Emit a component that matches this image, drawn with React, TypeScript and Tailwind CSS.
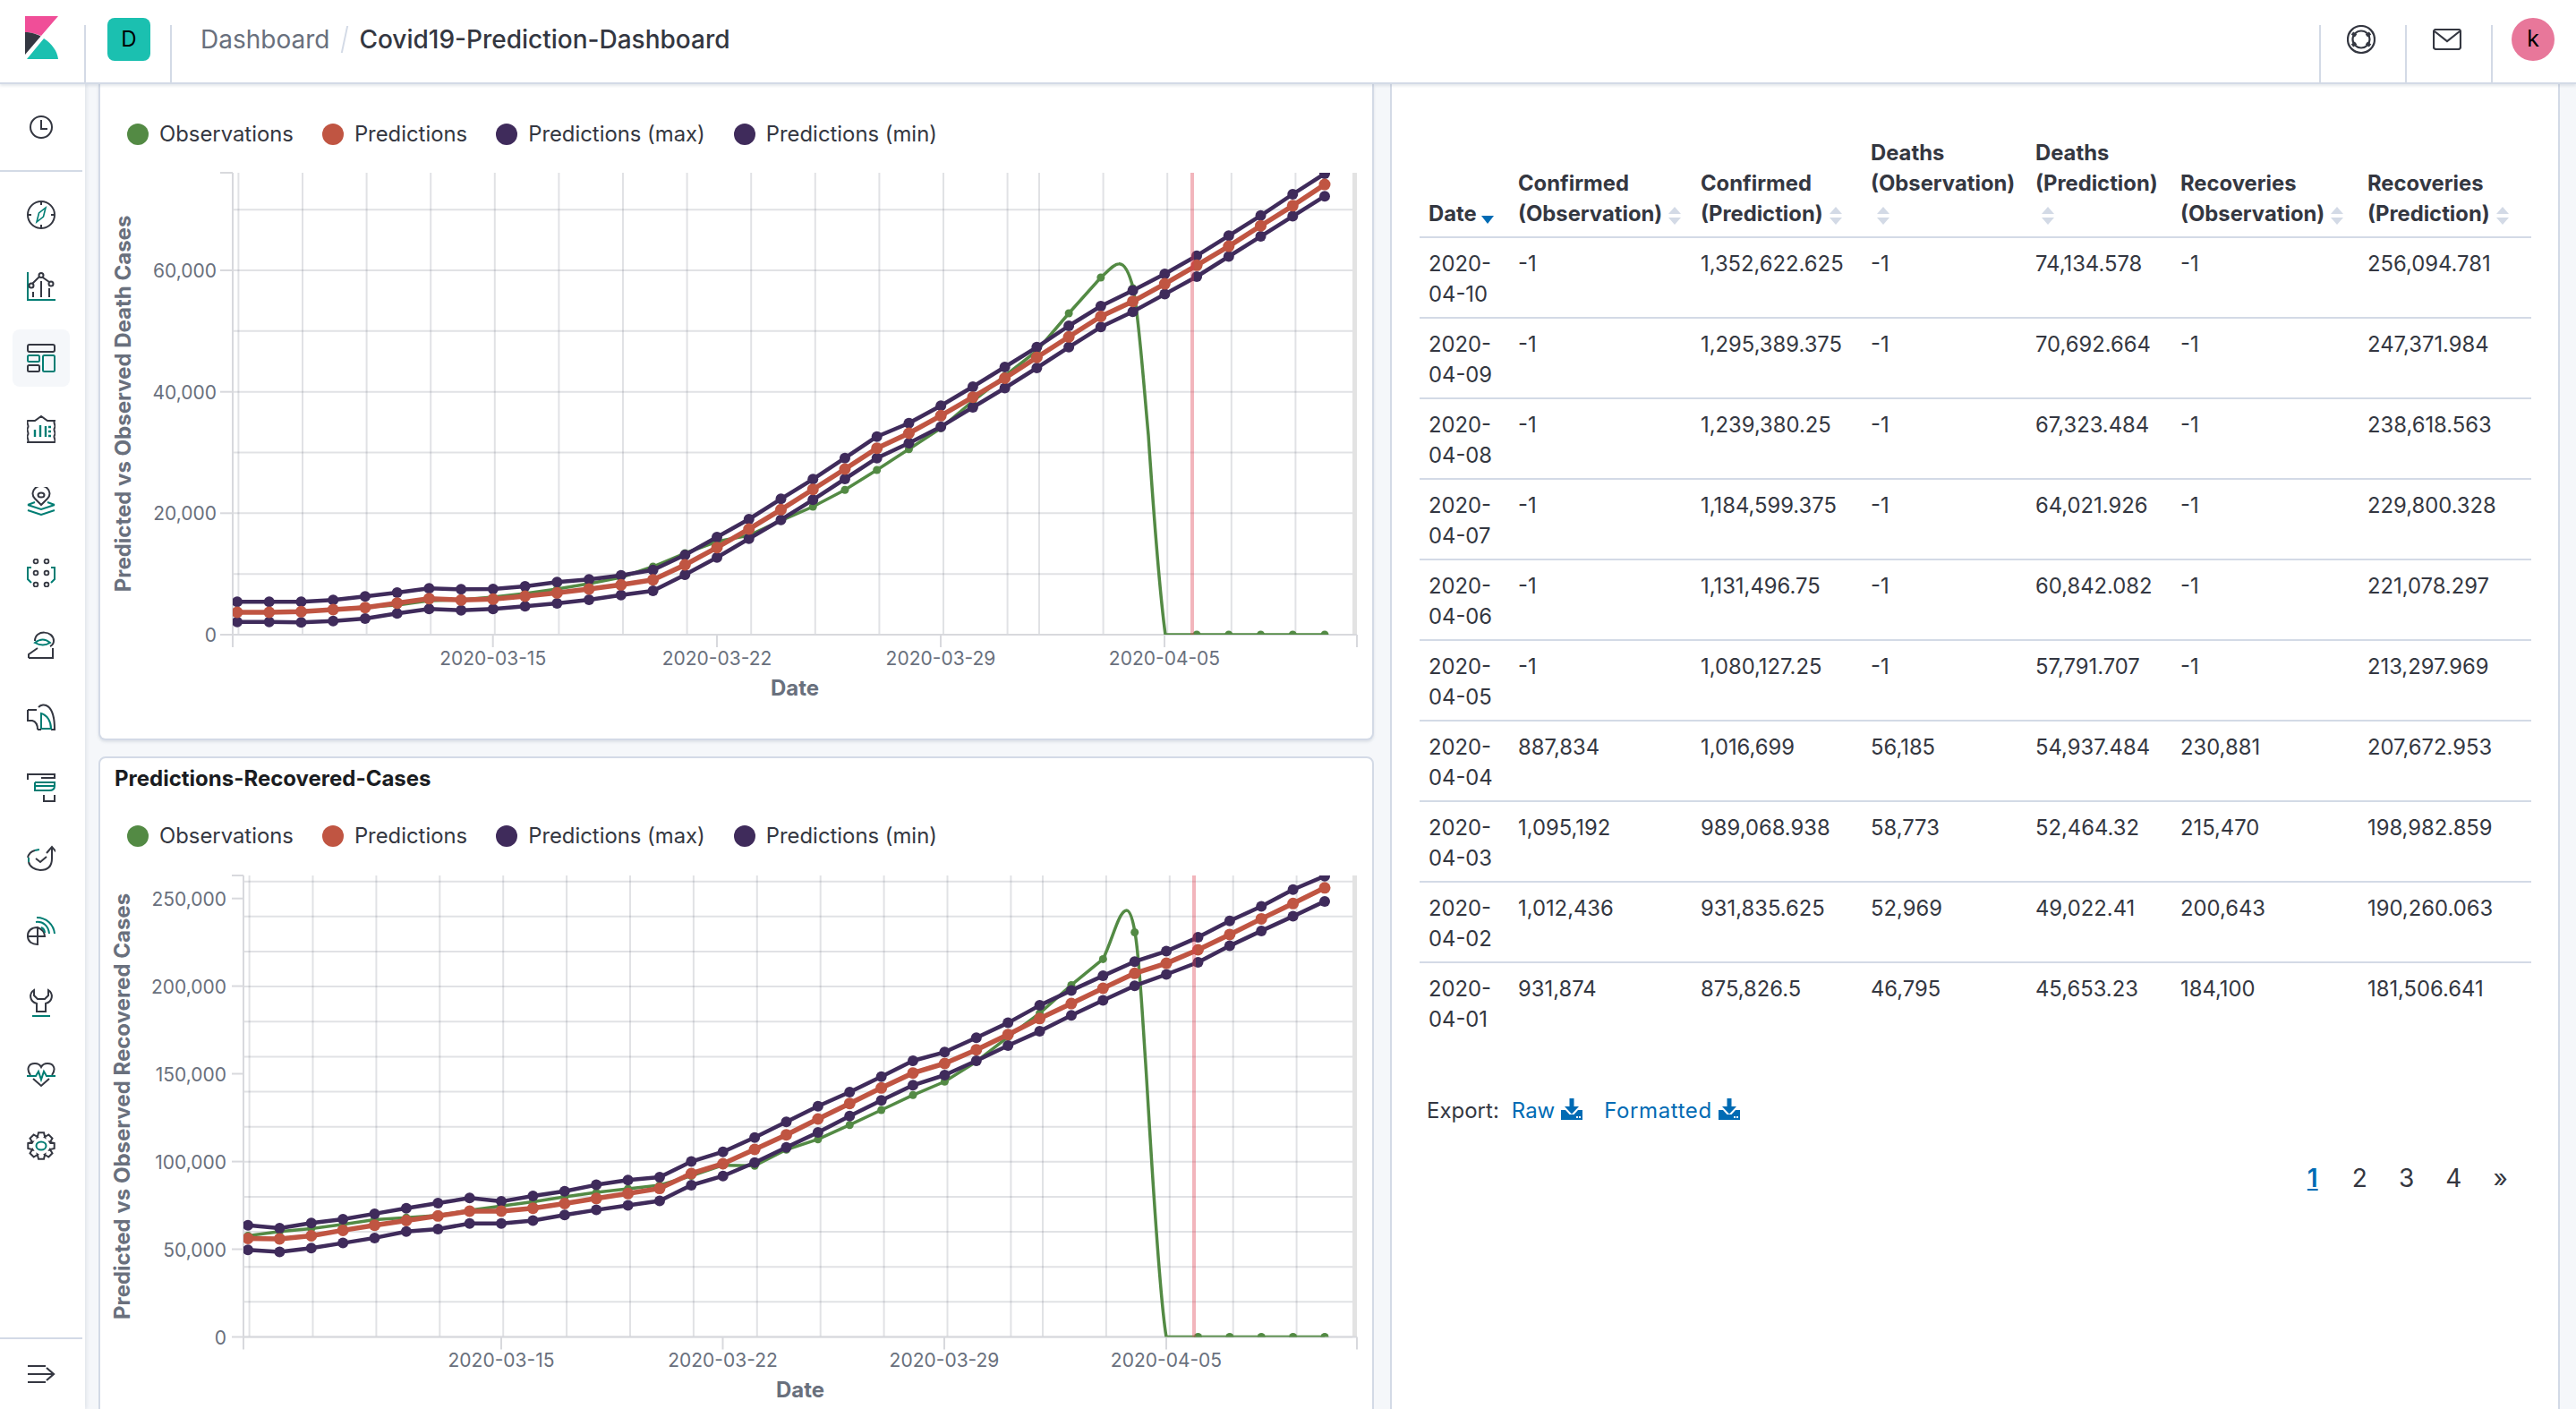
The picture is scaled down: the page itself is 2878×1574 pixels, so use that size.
import React from "react";

const DK = "#343741";
const TL = "#017d73";

const rows = [
  ["04-10", "-1", "1,352,622.625", "-1", "74,134.578", "-1", "256,094.781"],
  ["04-09", "-1", "1,295,389.375", "-1", "70,692.664", "-1", "247,371.984"],
  ["04-08", "-1", "1,239,380.25", "-1", "67,323.484", "-1", "238,618.563"],
  ["04-07", "-1", "1,184,599.375", "-1", "64,021.926", "-1", "229,800.328"],
  ["04-06", "-1", "1,131,496.75", "-1", "60,842.082", "-1", "221,078.297"],
  ["04-05", "-1", "1,080,127.25", "-1", "57,791.707", "-1", "213,297.969"],
  ["04-04", "887,834", "1,016,699", "56,185", "54,937.484", "230,881", "207,672.953"],
  ["04-03", "1,095,192", "989,068.938", "58,773", "52,464.32", "215,470", "198,982.859"],
  ["04-02", "1,012,436", "931,835.625", "52,969", "49,022.41", "200,643", "190,260.063"],
  ["04-01", "931,874", "875,826.5", "46,795", "45,653.23", "184,100", "181,506.641"],
];

type ChartSpec = {
  vb: [number, number, number, number];
  x0: number;
  x1: number;
  max: number[];
  pred: number[];
  min: number[];
  obs: number[];
  tail: string;
  tailStart: number;
  axisX: number;
  top: number;
  bottom: number;
  yTicks: [string, number][];
  hGrid: number[];
  vGrid: number[];
  xTicks: [string, number][];
  redX: number;
  yTitle: string;
  yTitleX: number;
  yTitleY: number;
  labelRight: number;
  labelY: number;
  dateX: number;
  dateY: number;
  tickLeft: number;
};

const range = (n: number, f: (i: number) => number) => Array.from({ length: n }, (_, i) => f(i));

const chart1: ChartSpec = {
  vb: [112, 164, 1421, 660],
  x0: 265,
  x1: 1480,
  max: [672.3,672.3,672.3,670.3,666.3,662,657.3,658.3,658,655,650.3,647.3,642.7,636.7,620,600,580,557.3,535.3,511.7,487.7,472.7,453.3,432,410,387.8,364,342,324.5,306,285.7,263.3,240.8,217,194],
  pred: [684,684,683.3,681,678.7,673.7,668.7,670.3,669.3,666,662.3,658,653.3,647.7,631,611.7,591,569.3,546.7,524,500.7,484,464.3,443.7,422.4,399.2,376.3,353.5,336.7,317.1,296.3,275.1,252.2,229.8,206.1],
  min: [694.7,694.7,695.3,693.7,691,685.3,680.3,681.7,680.3,677.3,674,670,664.7,660,642,622.7,601.7,580.7,558.3,535,511.7,495,476.7,455,433.5,411,387.8,365.3,348.2,328.6,309,286.5,264.1,241.6,219.2],
  obs: [684,684,683,681,678,676,671,670,667,663,658,652,645,633,618,605,598,581.7,566,547.3,525,501.7,478.3,448,420,392,350,310],
  tail: "C1238 303 1244 295 1250 294.7 C1258 294 1263 310 1266 322 C1272 350 1277 420 1283 486 C1288 560 1296 665 1302 709",
  tailStart: 322,
  axisX: 260,
  top: 193,
  bottom: 709,
  yTicks: [["60,000", 302], ["40,000", 437.7], ["20,000", 573.3], ["0", 709]],
  hGrid: range(8, (n) => 709 - 67.83 * n),
  vGrid: [...range(13, (k) => 266.4 + 71.6 * k), ...range(5, (m) => 1161 + 71.6 * m)],
  xTicks: [["2020-03-15", 550.7], ["2020-03-22", 801], ["2020-03-29", 1051], ["2020-04-05", 1301]],
  redX: 1332,
  yTitle: "Predicted vs Observed Death Cases",
  yTitleX: 138,
  yTitleY: 451,
  labelRight: 242,
  labelY: 735,
  dateX: 888,
  dateY: 769,
  tickLeft: 246,
};

const chart2: ChartSpec = {
  vb: [112, 948, 1421, 626],
  x0: 277,
  x1: 1480,
  max: [1368.7,1372,1366.3,1362,1355.9,1349.7,1344,1338.3,1342.1,1336,1330.7,1323.6,1318.3,1315,1297.6,1286.7,1270.7,1253.3,1235.7,1220,1202.7,1185,1175.3,1159.3,1142.6,1123.1,1106.4,1090.1,1074.2,1062.6,1047.1,1028.8,1012.5,993.8,978.7],
  pred: [1383.4,1383.9,1380.5,1374.4,1368.7,1363.5,1358.3,1353,1353,1349.7,1344.5,1338.8,1333.3,1327.6,1311,1300,1284,1267.7,1250,1232.7,1215.3,1198.7,1188,1172.7,1155.7,1137.8,1121.1,1104,1087.3,1076.1,1061,1043.9,1026.4,1009.3,991.8],
  min: [1396.2,1398.6,1394.3,1388.6,1382.9,1375.8,1373,1366.8,1366.8,1363.5,1357.3,1351.6,1346.6,1341.4,1324,1313.7,1298.7,1281.7,1265,1246.7,1229.3,1212.3,1201,1185,1168,1152.1,1134.2,1117.5,1101.2,1088.5,1075,1056.6,1039.9,1023.6,1006.9],
  obs: [1380.5,1375.8,1372.5,1367.7,1362.5,1360.2,1357.8,1352.1,1347.3,1342.6,1336.9,1332.1,1328,1324,1313.5,1301.7,1302.3,1284.3,1272.7,1256.7,1240,1223.3,1208.3,1186,1158.3,1132,1100.4,1071.4],
  tail: "C1243 1050 1250 1017 1258.7 1017 C1263 1017 1266 1030 1268 1041.5 C1273 1069 1276 1130 1280 1189 C1284 1250 1294 1440 1303 1493.5",
  tailStart: 1041.5,
  axisX: 272,
  top: 978,
  bottom: 1493.5,
  yTicks: [["250,000", 1003.7], ["200,000", 1101.6], ["150,000", 1199.5], ["100,000", 1297.6], ["50,000", 1395.5], ["0", 1493.5]],
  hGrid: range(14, (n) => 1493.5 - 39.14 * n),
  vGrid: [...range(13, (k) => 278.6 + 70.9 * k), ...range(5, (m) => 1165 + 70.9 * m)],
  xTicks: [["2020-03-15", 560], ["2020-03-22", 807.5], ["2020-03-29", 1055], ["2020-04-05", 1303]],
  redX: 1334,
  yTitle: "Predicted vs Observed Recovered Cases",
  yTitleX: 137,
  yTitleY: 1236,
  labelRight: 253,
  labelY: 1519,
  dateX: 894,
  dateY: 1553,
  tickLeft: 259,
};

function Series({ pts, color, width, r }: { pts: [number, number][]; color: string; width: number; r: number }) {
  return (
    <g>
      <polyline points={pts.map((p) => p.join(",")).join(" ")} fill="none" stroke={color} strokeWidth={width} strokeLinejoin="round" />
      {pts.map((p, i) => (
        <circle key={i} cx={p[0]} cy={p[1]} r={r} fill={color} />
      ))}
    </g>
  );
}

function Chart({ c, id }: { c: ChartSpec; id: string }) {
  const step = (c.x1 - c.x0) / 34;
  const xAt = (i: number) => c.x0 + step * i;
  const toPts = (a: number[]) => a.map((y, i) => [xAt(i), y] as [number, number]);
  const obsPts = toPts(c.obs);
  const zeroPts = range(5, (i) => [xAt(30 + i), c.bottom] as [number, number]);
  const axis = "#d8d9dd";
  return (
    <svg
      className="block"
      width={c.vb[2]}
      height={c.vb[3]}
      viewBox={c.vb.join(" ")}
      style={{ fontFamily: "Inter, sans-serif" }}
    >
      <defs>
        <clipPath id={id}>
          <rect x={c.axisX} y={c.top} width={1516 - c.axisX} height={c.bottom - c.top} />
        </clipPath>
      </defs>
      {c.hGrid.map((y, i) => (
        <line key={i} x1={c.axisX} x2={1511} y1={y} y2={y} stroke="#69707d" strokeOpacity={0.2} strokeWidth={2} />
      ))}
      {c.vGrid.map((x, i) => (
        <line key={i} x1={x} x2={x} y1={c.top} y2={c.bottom} stroke="#69707d" strokeOpacity={0.2} strokeWidth={2} />
      ))}
      <rect x={1511} y={c.top} width={5} height={c.bottom - c.top} fill="#e3e3e3" />
      <line x1={c.axisX} x2={c.axisX} y1={c.top} y2={c.bottom + 14} stroke={axis} strokeWidth={2} />
      <line x1={c.axisX} x2={1516} y1={c.bottom} y2={c.bottom} stroke={axis} strokeWidth={2} />
      <line x1={1516} x2={1516} y1={c.bottom} y2={c.bottom + 14} stroke={axis} strokeWidth={2} />
      <line x1={c.tickLeft} x2={c.axisX} y1={c.top} y2={c.top} stroke={axis} strokeWidth={2} />
      {c.yTicks.map(([t, y]) => (
        <g key={t}>
          <line x1={c.tickLeft} x2={c.axisX} y1={y} y2={y} stroke={axis} strokeWidth={2} />
          <text x={c.labelRight} y={y + 8} textAnchor="end" fontSize={21} fill="#69707d">
            {t}
          </text>
        </g>
      ))}
      {c.xTicks.map(([t, x]) => (
        <g key={t}>
          <line x1={x} x2={x} y1={c.bottom} y2={c.bottom + 14} stroke={axis} strokeWidth={2} />
          <text x={x} y={c.labelY + 8} textAnchor="middle" fontSize={21} fill="#69707d">
            {t}
          </text>
        </g>
      ))}
      <text x={c.dateX} y={c.dateY + 8} textAnchor="middle" fontSize={24} fontWeight={700} fill="#69707d">
        Date
      </text>
      <text
        transform={`rotate(-90 ${c.yTitleX} ${c.yTitleY})`}
        x={c.yTitleX}
        y={c.yTitleY + 8}
        textAnchor="middle"
        fontSize={24}
        fontWeight={700}
        fill="#69707d"
      >
        {c.yTitle}
      </text>
      <g clipPath={`url(#${id})`}>
        <path
          d={`M${obsPts.map((p) => p.join(" ")).join(" L")} ${c.tail} L1480 ${c.bottom}`}
          fill="none"
          stroke="#538a44"
          strokeWidth={3.5}
        />
        {obsPts.map((p, i) => (
          <circle key={i} cx={p[0]} cy={p[1]} r={4.5} fill="#538a44" />
        ))}
        <circle cx={xAt(28)} cy={c.tailStart} r={4.5} fill="#538a44" />
        {zeroPts.map((p, i) => (
          <circle key={i} cx={p[0]} cy={p[1]} r={4.5} fill="#538a44" />
        ))}
        <Series pts={toPts(c.max)} color="#3f2b5b" width={4.5} r={6} />
        <Series pts={toPts(c.min)} color="#3f2b5b" width={4.5} r={6} />
        <Series pts={toPts(c.pred)} color="#c05542" width={5.5} r={6.5} />
      </g>
      <rect x={c.redX - 2} y={c.top} width={4} height={c.bottom - c.top} fill="#dd3c50" fillOpacity={0.38} />
    </svg>
  );
}

function Legend() {
  const items: [string, string][] = [
    ["Observations", "bg-[#538a44]"],
    ["Predictions", "bg-[#c05542]"],
    ["Predictions (max)", "bg-[#3f2b5b]"],
    ["Predictions (min)", "bg-[#3f2b5b]"],
  ];
  return (
    <div className="flex h-[29px] items-center gap-[32px] pl-[30px]">
      {items.map(([t, cls]) => (
        <div key={t} className="flex items-center gap-[12px]">
          <span className={`h-[24px] w-[24px] rounded-full ${cls}`} />
          <span className="text-[23.85px] leading-[29px] text-[#343741]">{t}</span>
        </div>
      ))}
    </div>
  );
}

function SortIcon({ active }: { active?: boolean }) {
  if (active)
    return (
      <svg className="ml-[5px] inline-block align-[-4px]" width="14" height="10" viewBox="0 0 14 10">
        <path d="M0 0H14L7 9Z" fill="#006bb4" />
      </svg>
    );
  return (
    <svg className="ml-[7px] inline-block align-[-4px]" width="14" height="20" viewBox="0 0 14 20">
      <path d="M0 8L7 0L14 8Z M0 12H14L7 20Z" fill="#d3dae6" />
    </svg>
  );
}

function Ico({ children }: { children: React.ReactNode }) {
  return (
    <svg width="32" height="32" viewBox="0 0 32 32" fill="none" strokeWidth="2" stroke={DK}>
      {children}
    </svg>
  );
}

const gearPath = (() => {
  const pts: string[] = [];
  const n = 8;
  for (let i = 0; i < n; i++) {
    const a = (i * 2 * Math.PI) / n - Math.PI / 2;
    const d = 0.2;
    const seq: [number, number][] = [
      [10.5, a - 0.39 * 1.05],
      [15, a - d],
      [15, a + d],
      [10.5, a + 0.39 * 1.05],
    ];
    seq.forEach(([r, t]) => pts.push(`${(16 + r * Math.cos(t)).toFixed(1)} ${(16 + r * Math.sin(t)).toFixed(1)}`));
  }
  return "M" + pts.join(" L") + " Z";
})();

const navIcons: React.ReactNode[] = [
  <Ico key="c">
    <circle cx="16" cy="16" r="15" />
    <path d="M16 2V5M16 27V30M2 16H5M27 16H30" />
    <path d="M21 8L18.5 18L11 24L13.5 14Z" stroke={TL} strokeWidth="1.6" />
  </Ico>,
  <Ico key="v">
    <path d="M1 0V31H32" stroke={TL} />
    <path d="M6 13L15 4L25 11" />
    <circle cx="5" cy="15" r="2.5" fill="#fff" />
    <circle cx="16" cy="3.5" r="2.5" fill="#fff" />
    <circle cx="27" cy="13" r="2.5" fill="#fff" />
    <path d="M7 22V28M16 10V28M25 18V28" />
  </Ico>,
  <Ico key="d">
    <rect x="1" y="1" width="30" height="8" rx="2" />
    <rect x="1" y="13" width="13" height="7" rx="1.5" stroke={TL} />
    <rect x="1" y="24" width="13" height="7" rx="1.5" />
    <rect x="18" y="13" width="13" height="18" rx="1.5" stroke={TL} />
  </Ico>,
  <Ico key="cv">
    <path d="M1 6H9L16 1L23 6H31C29 9 33 11 31 14C29 17 33 19 31 22C29 25 33 27 31 30H1C3 27 -1 25 1 22C3 19 -1 17 1 14C3 11 -1 9 1 6Z" />
    <path d="M9 16V24M15 11V24M21 12V24M24 13H27M24 18H27M24 23H27" stroke={TL} strokeWidth="2.4" />
  </Ico>,
  <Ico key="m">
    <path d="M16 20L9 13A9.5 8.5 0 1 1 23 13Z" />
    <ellipse cx="16" cy="9" rx="3.5" ry="2.5" />
    <path d="M1 20L9 17M31 20L23 17M1 20L16 25L31 20M1 26L16 31L31 26" stroke={TL} />
  </Ico>,
  <Ico key="ml">
    <g strokeWidth="1.8">
      <circle cx="10" cy="3" r="2.4" />
      <circle cx="22" cy="3" r="2.4" />
      <circle cx="10" cy="16" r="2.4" />
      <circle cx="22" cy="16" r="2.4" />
      <circle cx="10" cy="29" r="2.4" />
      <circle cx="22" cy="29" r="2.4" />
    </g>
    <path d="M5 10L1 10V23L5 27M27 10L31 10V23L27 27" stroke={TL} />
  </Ico>,
  <Ico key="u">
    <path d="M2 31V27L12 20M2 31H29V20" />
    <path d="M9 12C9 -1 30 0 30 12C30 15 28 17 26 18" />
    <path d="M9 14Q18 7 26 14Q18 19 9 14Z" stroke={TL} />
  </Ico>,
  <Ico key="a">
    <path d="M13 6C18 1 31 1 31 31H27" />
    <path d="M1 9H11M1 9V21H6C10 22 12 26 12 31" />
    <path d="M16 30V13C23 15 27 22 27 30Z" stroke={TL} />
    <path d="M12 31H16" />
  </Ico>,
  <Ico key="t">
    <path d="M1 7V1H31V5H16" />
    <path d="M9 10H31V14C31 18 28 19 25 19H9V10M31 14H9" stroke={TL} />
    <path d="M19 24V31H31V24" />
  </Ico>,
  <Ico key="s">
    <path d="M9 6C5 7 2 10 1 14M2 19C3 24 9 28 15 28C23 28 28 24 28 15V3M22 9L28 2L34 9" />
    <path d="M9 6L14 5M2 14V19" stroke={TL} strokeDasharray="5 3" />
    <path d="M10 15L15 19L22 13" />
  </Ico>,
  <Ico key="r">
    <path d="M12 31V12C5 12 1 16 1 21V22H20C20 17 17 14 12 12M12 22V31C6 31 1 28 1 22" />
    <path d="M10 6C18 5 24 10 25 19M11 1C22 1 30 9 31 19M16 12C18 13 20 15 20 18" stroke={TL} />
  </Ico>,
  <Ico key="w">
    <path d="M8 2C2 6 3 15 11 17V26H21V17C29 15 30 6 24 2V8L20 12H12L8 8Z" />
    <path d="M6 31H26" stroke={TL} />
  </Ico>,
  <Ico key="h">
    <path d="M4 17C-1 10 2 4 9 4C12 4 15 6 16 8C17 6 20 4 23 4C30 4 33 10 28 17M7 21L16 29L25 21" />
    <path d="M0 18H10L13 13L16 22L19 13L22 18H32" stroke={TL} />
  </Ico>,
  <Ico key="g">
    <path d={gearPath} />
    <ellipse cx="16" cy="16" rx="5.5" ry="4.5" stroke={TL} />
  </Ico>,
];

function DownloadIcon() {
  return (
    <svg className="ml-[7px] inline-block align-[-2px]" width="24" height="24" viewBox="0 0 24 24" fill="#006bb4">
      <path d="M9.5 0H14.5V9H20L12 17.5L4 9H9.5Z" />
      <path d="M0 13H5L9.5 18H14.5L19 13H24V24H0Z" />
      <rect x="17" y="20" width="2" height="2" fill="#fff" />
      <rect x="20" y="20" width="2" height="2" fill="#fff" />
    </svg>
  );
}

const thCls = "whitespace-nowrap pb-[8px] pl-[10px] align-bottom font-bold";
const tdCls = "pb-[8px] pl-[10px] pt-[12px] align-top";

export default function App() {
  return (
    <div className="flex h-[1574px] w-[2878px] flex-col overflow-hidden bg-[#f5f7fa] text-[#343741] [font-family:Inter,sans-serif]">
      <header className="relative z-10 flex h-[94px] shrink-0 border-b-2 border-[#d3dae6] bg-white shadow-[0_2px_3px_rgba(152,162,179,0.25)]">
        <div className="h-[88px] w-[94px]">
          <svg width="94" height="88" viewBox="0 0 94 88">
            <path d="M28 18H65L46 40C41 38 34 36 28 36Z" fill="#f04e98" />
            <path d="M28 36C34 36 41 38 45.5 40.5L28 61Z" fill="#343741" />
            <path d="M30 66L49 43C58 49 64 57 65 66Z" fill="#1bc0b0" />
          </svg>
        </div>
        <div className="mt-[28px] h-[64px] w-[2px] bg-[#d3dae6]" />
        <div className="flex h-[88px] w-[94px] items-center justify-center pl-[2px]">
          <div className="flex h-[48px] w-[48px] items-center justify-center rounded-[8px] bg-[#1bc0b0] text-[24px] text-black">
            D
          </div>
        </div>
        <div className="mt-[28px] h-[64px] w-[2px] bg-[#d3dae6]" />
        <div className="flex h-[88px] flex-1 items-center pl-[32px] text-[28px]">
          <span className="text-[#69707d]">Dashboard</span>
          <span className="ml-[16px] mr-[15px] h-[30px] w-[2px] -skew-x-12 bg-[#d3dae6]" />
          <span className="font-medium text-[#343741]">Covid19-Prediction-Dashboard</span>
        </div>
        <div className="mt-[28px] h-[64px] w-[2px] bg-[#d3dae6]" />
        <div className="flex h-[88px] w-[94px] items-center justify-center pr-[4px]">
          <svg width="32" height="32" viewBox="0 0 32 32" fill="none" stroke={DK} strokeWidth="2.2">
            <circle cx="16" cy="16" r="15" />
            <circle cx="16" cy="16" r="9.5" />
            <path d="M6 9L10 12M26 9L22 12M6 23L10 20M26 23L22 20" strokeWidth="4" />
          </svg>
        </div>
        <div className="mt-[28px] h-[64px] w-[2px] bg-[#d3dae6]" />
        <div className="flex h-[88px] w-[94px] items-center justify-center pr-[4px]">
          <svg width="32" height="24" viewBox="0 0 32 24" fill="none" stroke={DK} strokeWidth="2.2">
            <rect x="1" y="1" width="30" height="22" rx="2.5" />
            <path d="M2 3L16 14L30 3" />
          </svg>
        </div>
        <div className="mt-[28px] h-[64px] w-[2px] bg-[#d3dae6]" />
        <div className="flex h-[88px] w-[93px] items-center justify-center pr-[3px]">
          <div className="flex h-[48px] w-[48px] items-center justify-center rounded-full bg-[#e8779a] text-[25px] text-black">
            k
          </div>
        </div>
      </header>

      <div className="flex min-h-0 flex-1">
        <nav className="flex w-[95px] shrink-0 flex-col bg-white pr-[3px] shadow-[2px_0_4px_rgba(152,162,179,0.2)]">
          <div className="flex h-[98px] shrink-0 items-center justify-center border-b-2 border-[#d3dae6]">
            <svg width="26" height="26" viewBox="0 0 26 26" fill="none" stroke={DK} strokeWidth="2">
              <circle cx="13" cy="13" r="12" />
              <path d="M13 5V15H20" />
            </svg>
          </div>
          <div className="flex flex-col pt-[8px]">
            {navIcons.map((ic, i) => (
              <div key={i} className="flex h-[80px] items-center justify-center">
                {i === 2 ? (
                  <div className="flex h-[64px] w-[64px] items-center justify-center rounded-[8px] bg-[#f5f7fa]">{ic}</div>
                ) : (
                  ic
                )}
              </div>
            ))}
          </div>
          <div className="mt-auto flex h-[80px] shrink-0 items-center justify-center border-t-2 border-[#d3dae6]">
            <svg width="32" height="24" viewBox="0 0 32 24" fill="none" stroke={DK} strokeWidth="2.2">
              <path d="M1 3H21M1 12H29M1 21H21M22 5L30 12L22 19" />
            </svg>
          </div>
        </nav>

        <main className="flex min-w-0 flex-1 gap-[18px] pl-[15px]">
          <div className="flex w-[1425px] shrink-0 flex-col gap-[18px]">
            <section className="h-[733px] shrink-0 rounded-b-[8px] border-x-2 border-b-2 border-[#d3dae6] bg-white shadow-[0_2px_3px_rgba(152,162,179,0.25)]">
              <div className="pt-[41px]">
                <Legend />
              </div>
              <Chart c={chart1} id="clip-a" />
            </section>
            <section className="h-[760px] shrink-0 rounded-[8px] border-2 border-[#d3dae6] bg-white">
              <h3 className="flex h-[44px] items-center pl-[16px] pt-[1px] text-[24px] font-bold text-[#1a1c21]">
                Predictions-Recovered-Cases
              </h3>
              <div className="pt-[28px]">
                <Legend />
              </div>
              <Chart c={chart2} id="clip-b" />
            </section>
          </div>

          <section className="w-[1307px] shrink-0 border-x-2 border-[#d3dae6] bg-white pl-[31px] pt-[60px]">
            <table className="w-[1242px] table-fixed border-collapse text-left text-[23.8px] leading-[34px]">
              <colgroup>
                <col className="w-[100px]" />
                <col className="w-[204px]" />
                <col className="w-[190px]" />
                <col className="w-[184px]" />
                <col className="w-[162px]" />
                <col className="w-[209px]" />
                <col className="w-[193px]" />
              </colgroup>
              <thead>
                <tr className="border-b-2 border-[#d3dae6] text-[#343741]">
                  <th className={thCls}>
                    Date
                    <SortIcon active />
                  </th>
                  <th className={thCls}>
                    Confirmed
                    <br />
                    (Observation)
                    <SortIcon />
                  </th>
                  <th className={thCls}>
                    Confirmed
                    <br />
                    (Prediction)
                    <SortIcon />
                  </th>
                  <th className={thCls}>
                    Deaths
                    <br />
                    (Observation)
                    <br />
                    <SortIcon />
                  </th>
                  <th className={thCls}>
                    Deaths
                    <br />
                    (Prediction)
                    <br />
                    <SortIcon />
                  </th>
                  <th className={thCls}>
                    Recoveries
                    <br />
                    (Observation)
                    <SortIcon />
                  </th>
                  <th className={thCls}>
                    Recoveries
                    <br />
                    (Prediction)
                    <SortIcon />
                  </th>
                </tr>
              </thead>
              <tbody>
                {rows.map((r, i) => (
                  <tr key={r[0]} className={i < rows.length - 1 ? "h-[90px] border-b-2 border-[#d3dae6]" : "h-[90px]"}>
                    <td className={tdCls}>
                      2020-
                      <br />
                      {r[0]}
                    </td>
                    {r.slice(1).map((v, j) => (
                      <td key={j} className={tdCls}>
                        {v}
                      </td>
                    ))}
                  </tr>
                ))}
              </tbody>
            </table>
            <div className="ml-[8px] mt-[59px] flex h-[34px] items-center text-[24px] leading-[34px]">
              <span>Export:</span>
              <a className="ml-[14px] text-[#006bb4]">
                Raw
                <DownloadIcon />
              </a>
              <a className="ml-[24px] tracking-[0.6px] text-[#006bb4]">
                Formatted
                <DownloadIcon />
              </a>
            </div>
            <div className="mt-[41px] flex w-[1234px] justify-end text-[28px] leading-[34px]">
              <span className="w-[52.5px] text-center font-semibold text-[#006bb4] underline">1</span>
              <span className="w-[52.5px] text-center">2</span>
              <span className="w-[52.5px] text-center">3</span>
              <span className="w-[52.5px] text-center">4</span>
              <span className="w-[52.5px] text-center">»</span>
            </div>
          </section>
        </main>
      </div>
    </div>
  );
}
